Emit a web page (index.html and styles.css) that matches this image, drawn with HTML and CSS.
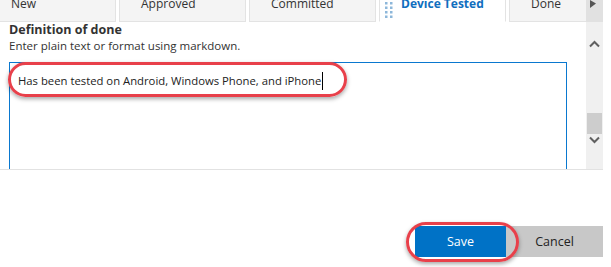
FILE: index.html
```html
<!DOCTYPE html>
<html lang="en">
<head>
  <meta charset="UTF-8" />
  <title>Board settings - Definition of done</title>
  <link rel="stylesheet" href="styles.css">
</head>
<body>
  <div class="tab-row">
    <div class="tab-strip">
      <div class="tab first">New</div>
      <div class="tab">Approved</div>
      <div class="tab">Committed</div>
      <div class="tab active">
        <svg class="grip" width="8" height="16" viewBox="0 0 8 16">
          <rect x="0" y="0" width="2.5" height="2.5" />
          <rect x="5" y="0" width="2.5" height="2.5" />
          <rect x="0" y="4.5" width="2.5" height="2.5" />
          <rect x="5" y="4.5" width="2.5" height="2.5" />
          <rect x="0" y="9" width="2.5" height="2.5" />
          <rect x="5" y="9" width="2.5" height="2.5" />
          <rect x="0" y="13.5" width="2.5" height="2.5" />
          <rect x="5" y="13.5" width="2.5" height="2.5" />
        </svg>
        Device Tested
      </div>
      <div class="tab">Done</div>
    </div>
    <div class="tab-next">
      <svg width="17" height="22" viewBox="0 0 17 22">
        <polygon points="4,0 10,3.5 4,8" fill="#555" />
      </svg>
    </div>
  </div>

  <div class="editor-area">
    <div class="scroll-content">
      <div class="field-label">Definition of done</div>
      <div class="field-hint">Enter plain text or format using markdown.</div>
      <div class="textbox">Has been tested on Android, Windows Phone, and iPhone<span class="caret"></span></div>
    </div>
    <div class="scrollbar">
      <svg class="chev" width="17" height="12" viewBox="0 0 17 12">
        <polyline points="4,8.5 8.5,4 13,8.5" />
      </svg>
      <div class="thumb"></div>
      <svg class="chev" width="17" height="12" viewBox="0 0 17 12">
        <polyline points="4,3.5 8.5,8 13,3.5" />
      </svg>
    </div>
  </div>

  <div class="actions">
    <button class="btn btn-save">Save</button>
    <button class="btn btn-cancel">Cancel</button>
  </div>

  <div class="callout callout-text"></div>
  <div class="callout callout-save"></div>
</body>
</html>
```

FILE: styles.css
```css
body {
  margin: 0;
  width: 611px;
  height: 267px;
  overflow: hidden;
  background: #ffffff;
  font-family: "Open Sans", "Noto Sans", sans-serif;
  font-size: 11px;
  color: #222222;
  position: relative;
}

.tab-row {
  display: flex;
  height: 22px;
}

.tab-strip {
  width: 586px;
  height: 22px;
  overflow: hidden;
  display: flex;
  align-items: flex-end;
}

.tab {
  flex: 0 0 127px;
  box-sizing: border-box;
  height: 30px;
  margin-right: 3px;
  padding: 3px 0 0 21px;
  line-height: 16px;
  font-size: 12px;
  color: #333333;
  background: #f4f4f4;
  border: 1px solid #e3e3e3;
  white-space: nowrap;
  position: relative;
}

.tab.first {
  margin-left: -11px;
}

.tab.active {
  background: #ffffff;
  border-bottom-color: #ffffff;
  color: #106ebe;
  font-weight: bold;
}

.grip {
  position: absolute;
  left: 5px;
  top: 9px;
  fill: #8db7da;
}

.tab-next {
  width: 17px;
  height: 22px;
  background: #e1e1e1;
}

.tab-next svg {
  display: block;
}

.editor-area {
  display: flex;
  width: 603px;
  height: 147px;
  border-bottom: 1px solid #e2e2e2;
}

.scroll-content {
  width: 586px;
  overflow: hidden;
  padding-left: 9px;
  box-sizing: border-box;
}

.field-label {
  margin-top: 0;
  font-size: 12.5px;
  font-weight: bold;
  line-height: 16px;
  color: #333333;
}

.field-hint {
  font-size: 11.5px;
  line-height: 16px;
  color: #333333;
}

.textbox {
  margin-top: 8px;
  width: 558px;
  height: 140px;
  box-sizing: border-box;
  border: 1px solid #0a78cf;
  padding: 8px 0 0 8px;
  font-size: 11.3px;
  line-height: 19px;
  color: #222222;
}

.caret {
  display: inline-block;
  width: 1px;
  height: 18px;
  background: #000000;
  vertical-align: -5px;
  margin-left: 1px;
}

.scrollbar {
  width: 17px;
  background: #f0f0f0;
  display: flex;
  flex-direction: column;
}

.chev {
  display: block;
}

.chev polyline {
  fill: none;
  stroke: #606060;
  stroke-width: 2;
}

.scrollbar .chev:first-child {
  margin-top: 16px;
}

.thumb {
  width: 15px;
  height: 21px;
  margin: 63px 0 0 1px;
  background: #cdcdcd;
}

.actions {
  display: flex;
  justify-content: flex-end;
  padding-right: 8px;
  margin-top: 56px;
}

.btn {
  height: 31px;
  border: none;
  font-family: "Open Sans", "Noto Sans", sans-serif;
  font-size: 12.5px;
  padding: 0;
  cursor: pointer;
}

.btn-save {
  width: 91px;
  background: #0072c6;
  color: #ffffff;
}

.btn-cancel {
  width: 97px;
  background: #c8c8c8;
  color: #222222;
}

.callout {
  position: absolute;
  box-sizing: border-box;
  border: 3px solid #e8404a;
  border-radius: 20px;
  box-shadow: 0 2px 4px rgba(0, 0, 0, 0.35);
}

.callout-text {
  left: 8px;
  top: 62px;
  width: 339px;
  height: 35px;
}

.callout-save {
  left: 406px;
  top: 222px;
  width: 113px;
  height: 40px;
}
```
